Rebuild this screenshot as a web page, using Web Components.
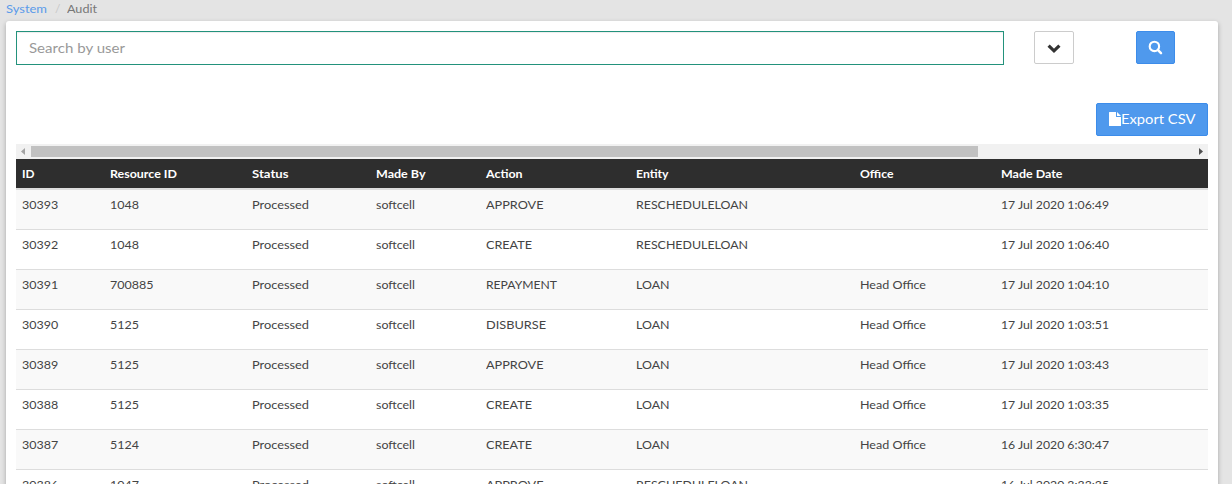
<!DOCTYPE html>
<html lang="en">
<head>
<meta charset="utf-8">
<title>Audit</title>
<style>
html,body{margin:0;height:100%;overflow:hidden;background:#e4e4e4}
</style>
</head>
<body>
<audit-page></audit-page>
<script>
function shadow(el, html){
  const t = document.createElement('template');
  t.innerHTML = html;
  el.attachShadow({mode:'open'}).appendChild(t.content.cloneNode(true));
  return el.shadowRoot;
}

// A label whose glyphs are widened to reach a given width.
customElements.define('fit-label', class extends HTMLElement{
  connectedCallback(){
    if(this.shadowRoot) return;
    const root = shadow(this, `<style>:host{display:inline-block;white-space:nowrap}span{display:inline-block;transform-origin:0 50%}</style><span><slot></slot></span>`);
    const want = parseFloat(this.getAttribute('w'));
    const span = root.querySelector('span');
    if(want){
      const have = span.getBoundingClientRect().width;
      span.style.transform = 'scaleX(' + (want / have).toFixed(4) + ')';
      this.style.width = want + 'px';
    }
  }
});

customElements.define('bread-crumb', class extends HTMLElement{
  connectedCallback(){
    shadow(this, `<style>
      :host{display:flex;height:21px;line-height:18px;padding-left:6px;box-sizing:border-box;font-size:12px;color:#777}
      a{color:#5b9bea;width:49px}
      i{font-style:normal;color:#c8c8c8;width:12px}
    </style><a><fit-label w="41">System</fit-label></a><i>/</i><fit-label w="30">Audit</fit-label>`);
  }
});

customElements.define('ui-button', class extends HTMLElement{
  connectedCallback(){
    shadow(this, `<style>
      :host{display:flex;align-items:center;justify-content:center;box-sizing:border-box;height:33px;border:1px solid #3c8cea;border-radius:2px;background:#4f99ed;color:#fff;font-size:14px}
      :host([plain]){background:#fff;border-color:#ccc;color:#333}
    </style><slot></slot>`);
  }
});

customElements.define('search-bar', class extends HTMLElement{
  connectedCallback(){
    shadow(this, `<style>
      :host{display:flex;align-items:flex-start;height:72px}
      .field{box-sizing:border-box;width:988px;height:34px;border:1px solid #23927c;padding-left:12px;line-height:31px;font-size:14px;color:#999;box-shadow:inset 0 1px 1px rgba(0,0,0,.075)}
      .more{width:40px;margin-left:30px}
      .go{width:39px;margin-left:62px}
      svg{display:block}
    </style>
    <div class="field"><fit-label w="96">Search by user</fit-label></div>
    <ui-button class="more" plain><svg width="14" height="14" viewBox="0 0 14 14"><path d="M1.600 4.600 7 9.800l5.400-5.200" fill="none" stroke="#333" stroke-width="3.200"/></svg></ui-button>
    <ui-button class="go"><svg width="15" height="15" viewBox="0 0 15 15"><circle cx="6.400" cy="6.400" r="4.700" fill="none" stroke="#fff" stroke-width="2.100"/><path d="m9.800 9.900 3.200 3.200" stroke="#fff" stroke-width="2.500" stroke-linecap="round"/></svg></ui-button>`);
  }
});

customElements.define('export-bar', class extends HTMLElement{
  connectedCallback(){
    shadow(this, `<style>
      :host{display:flex;justify-content:flex-end;height:41px}
      ui-button{width:112px}
      svg{display:block;margin-bottom:2px}
      fit-label{padding-bottom:2px}
    </style>
    <ui-button><svg width="12" height="14" viewBox="0 0 12 14"><path d="M0 .5Q0 0 .5 0H7v4.500q0 .5.5.5H12v8.500q0 .5-.5.5H.5q-.5 0-.5-.5zM8 0l4 4H8z" fill="#fff"/></svg><fit-label w="74.5">Export CSV</fit-label></ui-button>`);
  }
});

customElements.define('scroll-track', class extends HTMLElement{
  connectedCallback(){
    shadow(this, `<style>
      :host{display:flex;align-items:center;height:15px;background:#f1f1f1}
      .thumb{width:947px;height:11px;background:#c1c1c1}
      .end{margin-left:auto}
      svg{display:block}
    </style>
    <svg width="15" height="15"><path d="M9 4v7L5 7.500z" fill="#a3a3a3"/></svg>
    <div class="thumb"></div>
    <svg class="end" width="15" height="15"><path d="M6 4v7l4-3.500z" fill="#505050"/></svg>`);
  }
});

const WIDTHS = {
  'ID':12.5,'Resource ID':67,'Status':36.5,'Made By':49.5,'Action':36.5,'Entity':32.5,'Office':33.5,'Made Date':61.5,
  'Processed':57,'softcell':39,'APPROVE':57.5,'CREATE':46,'REPAYMENT':71,'DISBURSE':60,
  'RESCHEDULELOAN':112,'LOAN':33.5,'Head Office':66
};
function widthOf(t){
  if(WIDTHS[t]) return WIDTHS[t];
  if(/^\d+$/.test(t)) return t.length * 7.25;
  return 108;
}

customElements.define('audit-row', class extends HTMLElement{
  connectedCallback(){
    const cells = this.getAttribute('cells').split('|');
    shadow(this, `<style>
      :host{display:grid;grid-template-columns:88px 142px 124px 110px 150px 224px 141px 1fr;box-sizing:border-box;height:40px;padding:6px 0 0 6px;border-top:1px solid #ddd;line-height:17px;font-size:12px;color:#444;background:#fff}
      :host([odd]){background:#f9f9f9}
      :host([first]){border-top:0;height:39px}
      :host([head]){height:31px;padding-top:6px;border-top:0;border-bottom:2px solid #ddd;background:#2e2e2e;color:#fff;font-weight:700}
    </style>` + cells.map(c => `<div>${c ? `<fit-label w="${widthOf(c)}">${c}</fit-label>` : ''}</div>`).join(''));
  }
});

customElements.define('audit-table', class extends HTMLElement{
  connectedCallback(){
    const rows = [
      '30393|1048|Processed|softcell|APPROVE|RESCHEDULELOAN||17 Jul 2020 1:06:49',
      '30392|1048|Processed|softcell|CREATE|RESCHEDULELOAN||17 Jul 2020 1:06:40',
      '30391|700885|Processed|softcell|REPAYMENT|LOAN|Head Office|17 Jul 2020 1:04:10',
      '30390|5125|Processed|softcell|DISBURSE|LOAN|Head Office|17 Jul 2020 1:03:51',
      '30389|5125|Processed|softcell|APPROVE|LOAN|Head Office|17 Jul 2020 1:03:43',
      '30388|5125|Processed|softcell|CREATE|LOAN|Head Office|17 Jul 2020 1:03:35',
      '30387|5124|Processed|softcell|CREATE|LOAN|Head Office|16 Jul 2020 6:30:47',
      '30386|1047|Processed|softcell|APPROVE|RESCHEDULELOAN||16 Jul 2020 3:33:35'
    ];
    shadow(this, `<style>:host{display:block}</style>
      <audit-row head cells="ID|Resource ID|Status|Made By|Action|Entity|Office|Made Date"></audit-row>` +
      rows.map((r,i) => `<audit-row ${i % 2 ? '' : 'odd'} ${i ? '' : 'first'} cells="${r}"></audit-row>`).join(''));
  }
});

customElements.define('audit-page', class extends HTMLElement{
  connectedCallback(){
    shadow(this, `<style>
      :host{display:block;height:484px;overflow:hidden;font-family:Lato,"Open Sans",sans-serif}
      main{box-sizing:border-box;margin:0 14px 0 6px;height:520px;padding:10px 10px 0;background:#fff;border-radius:3px;box-shadow:0 2px 5px rgba(0,0,0,.28)}
    </style>
    <bread-crumb></bread-crumb>
    <main><search-bar></search-bar><export-bar></export-bar><scroll-track></scroll-track><audit-table></audit-table></main>`);
  }
});
</script>
</body>
</html>
